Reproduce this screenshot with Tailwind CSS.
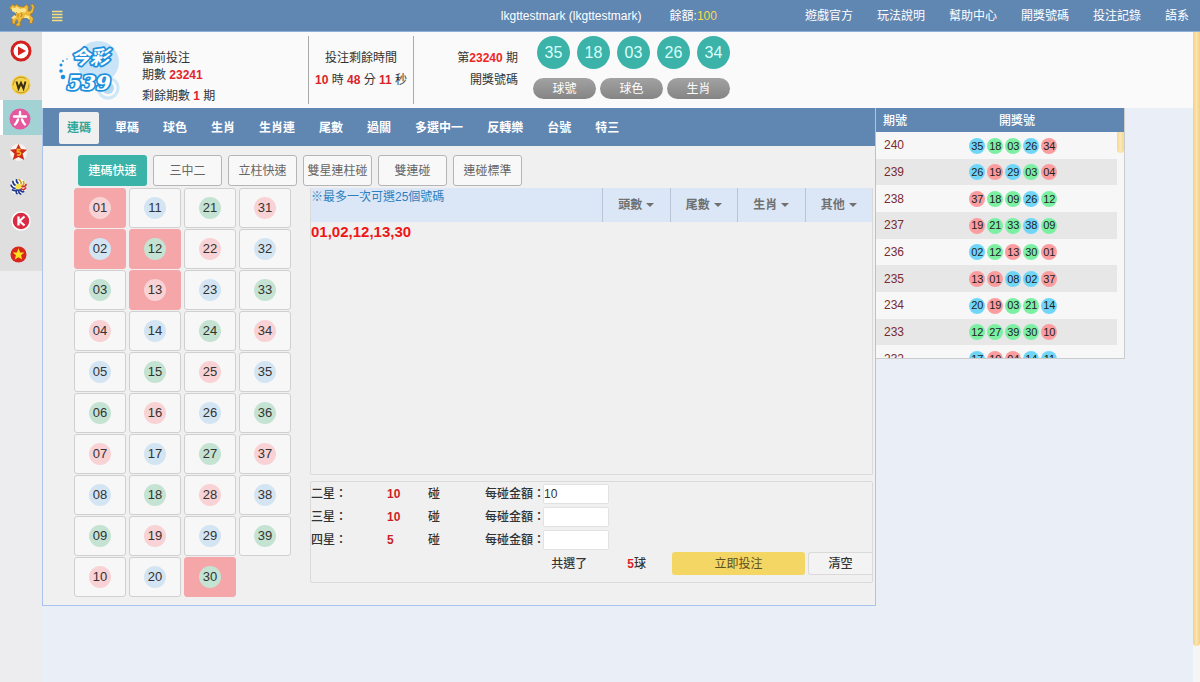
<!DOCTYPE html>
<html lang="zh-Hant">
<head>
<meta charset="utf-8">
<meta name="viewport" content="width=device-width, initial-scale=1">
<title>今彩539</title>
<script src="https://cdn.jsdelivr.net/npm/@tailwindcss/browser@4"></script>
</head>
<body class="min-h-screen flex flex-col bg-[#eaeef6] font-['Liberation_Sans','Noto_Sans_CJK_TC',sans-serif] text-xs text-[#333]">
<header class="flex h-8 items-center border-b border-[#8fb0d6] bg-[#6086b2] text-white">
  <a href="#" aria-label="首頁" class="ml-2">
    <svg class="h-7 w-7" viewBox="0 0 28 28"><path fill="#edb93a" stroke="#a8761c" stroke-width=".7" stroke-linejoin="round" d="M1.500 6l3-3.500 2 1.500 2-1.500 3 2 4 .5 3-2.500 2 2.500-.5 4 2.500 0 1.500-3.500-1.500-2.500 2.500-1 1.500 3-1.500 5.500-3 2 3.500 4-1.500 5-3-.5 1-3.500-4-2-4 1.500-2 4 .5 2.500-4 1-.5-2 2-2-1-3-1.500 1.500-.5 3-2.500 0-.5-5 4-4-.5-3-3-1z"/><path fill="#fce58a" d="M4 5.500l3 .5 2-1.500 3 2.500 4.500-1 2 1.500-1.500 3-4-.5-4 2-3-2-2-1zM3 16l3.500-3 2 2-3 2zM17 13l4 1 1 4-3-2-3 0z"/><path fill="none" stroke="#b37b1e" stroke-width=".8" d="M8 10q3 2 2 5M13 11q2 2 0 4"/></svg>
  </a>
  <button type="button" aria-label="選單" class="ml-[15px]">
    <svg class="h-3 w-3" viewBox="0 0 12 12"><path stroke="#f2df7e" stroke-width="1.500" d="M1 1.500h10.500M1 4.500h10.500M1 7.500h10.500M1 10.500h10.500"/></svg>
  </button>
  <p class="ml-auto">lkgttestmark (lkgttestmark)</p>
  <p class="ml-7">餘額:<span class="text-[#f5dc4a]">100</span></p>
  <nav class="mr-[11px] ml-22 flex gap-6">
    <a href="#">遊戲官方</a><a href="#">玩法說明</a><a href="#">幫助中心</a><a href="#">開獎號碼</a><a href="#">投注記錄</a><a href="#">語系</a>
  </nav>
</header>
<div class="flex flex-1">
  <aside class="w-[42px] shrink-0 bg-[#ededef]">
    <nav class="flex flex-col bg-[#dfdfdf]">
      <a href="#" aria-label="影片" class="flex h-[34px] items-center justify-center pt-[3px]">
        <svg class="h-[22px] w-[22px]" viewBox="0 0 22 22"><circle cx="11" cy="11" r="9" fill="#fff" stroke="#d3211d" stroke-width="3"/><path fill="#d3211d" d="M8 6.500l8 4.500-8 4.500z"/></svg></a>
      <a href="#" aria-label="威力" class="flex h-[34px] items-center justify-center pt-[3px]">
        <svg class="h-5 w-5" viewBox="0 0 20 20"><circle cx="10" cy="10" r="9.500" fill="#f4c93a"/><circle cx="10" cy="10" r="7.800" fill="#f7d44c" stroke="#a8842a" stroke-width=".7" stroke-dasharray="18 6"/><path fill="none" stroke="#3c300e" stroke-width="2" d="M5.500 6.500l2 7L10 8l2.500 5.500 2-7"/></svg></a>
      <a href="#" aria-label="六合" class="flex h-[35px] items-center justify-center border-l-3 border-white bg-[#a3d2d5] pt-0.5 pr-[5px]">
        <svg class="h-[22px] w-[22px]" viewBox="0 0 22 22"><circle cx="11" cy="11" r="10.500" fill="#e5579e"/><path fill="none" stroke="#fff" stroke-width="2.400" stroke-linecap="round" d="M11 4v3M5 8.500h12M9 11.500q-1 3-3 5M13 11.500q1 3 3 5"/></svg></a>
      <a href="#" aria-label="五星" class="flex h-[34px] items-center pl-2.5">
        <svg class="h-[17px] w-[17px]" viewBox="0 0 16 16"><circle cx="8" cy="8" r="8" fill="#f5f5ef"/><path fill="#cf2a1c" d="M8 0l2.300 4.800 5.700.6-4.200 3.800 1.600 5.800L8 12.200 2.600 15l1.600-5.800L0 5.400l5.700-.6z"/><path fill="none" stroke="#f6b51e" stroke-width="1.500" d="M10 5.300H7v2.200q3-.5 3 1.500t-3.500 1.200"/></svg></a>
      <a href="#" aria-label="彩球" class="flex h-[34px] items-center pl-2.5">
        <svg class="h-[17px] w-[17px]" viewBox="0 0 18 18"><circle cx="9" cy="9" r="8.500" fill="#fff"/><g fill="none" stroke-width="1.800"><path stroke="#20398d" d="M9 6Q6 4 7 1M6 8Q3 7 3 3M6 11Q2 11 1 7M8 13Q4 14 2 12"/><path stroke="#d2a51c" d="M12 7Q12 3 9 1M12 9Q16 7 14 3"/><path stroke="#d32b2c" d="M12 9Q17 10 17 6M11 11Q15 14 17 10"/><path stroke="#20398d" d="M10 12Q13 16 15 14M9 12Q9 17 12 17M8 12Q5 15 8 17"/></g><circle cx="9" cy="9" r="3" fill="#f6e04c"/></svg></a>
      <a href="#" aria-label="K彩" class="flex h-[35px] items-center justify-center">
        <svg class="h-5 w-5" viewBox="0 0 20 20"><circle cx="10" cy="10" r="9" fill="#da2b45" stroke="#fff" stroke-width="1.500"/><path fill="none" stroke="#fff" stroke-width="2.300" d="M7.500 5.500v9M13.500 5.500L8.500 10l5 4.500"/></svg></a>
      <a href="#" aria-label="越南彩" class="flex h-[33px] items-center pb-px pl-2.5">
        <svg class="h-[17px] w-[17px]" viewBox="0 0 18 18"><circle cx="9" cy="9" r="8.500" fill="#d8261c"/><path fill="#fbe21f" d="M9 2.500l1.700 4.300 4.500.2-3.500 2.900 1.200 4.500L9 11.900l-3.900 2.500 1.200-4.500L2.800 7l4.500-.2z"/></svg></a>
    </nav>
  </aside>
  <main class="min-w-0 flex-1">
    <section class="flex h-[76px] bg-[#fafafa]" aria-label="期數資訊">
      <svg class="mt-1.5 ml-4 h-16 w-16" viewBox="0 0 64 64" role="img" aria-label="今彩539">
        <circle cx="40" cy="24" r="21" fill="#c9e4f7"/><circle cx="50" cy="50" r="10" fill="#fafafa" stroke="#cfe7f7" stroke-width="3"/><circle cx="50" cy="50" r="6" fill="#b5daf3"/>
        <g fill="#1993e0"><circle cx="5" cy="39" r="2.300"/><circle cx="3" cy="33" r="1.800"/><circle cx="3" cy="27" r="1.500"/><circle cx="5" cy="23" r="1"/><circle cx="9" cy="21" r=".7"/></g>
        <g fill="#fff" stroke="#1c8fdd" stroke-width="3.500" stroke-linejoin="round" paint-order="stroke" font-weight="700" font-style="italic"><text x="13" y="26" font-size="19" font-family="Noto Sans CJK TC">今彩</text><text x="9" y="52" font-size="21" font-family="DejaVu Serif">539</text></g>
      </svg>
      <div class="mt-[18px] ml-5 w-[166px] leading-[17px]">
        <p>當前投注</p>
        <p>期數 <span class="font-bold text-[#e3242b]">23241</span></p>
        <p class="mt-1">剩餘期數 <span class="font-bold text-[#e3242b]">1</span> 期</p>
      </div>
      <div class="my-1 w-[106px] border-x border-[#aaa] pt-[11px] text-center leading-[22px]">
        <p>投注剩餘時間</p>
        <p class="whitespace-nowrap"><b class="text-[#d8232a]">10</b> 時 <b class="text-[#d8232a]">48</b> 分 <b class="text-[#d8232a]">11</b> 秒</p>
      </div>
      <div class="w-[104px] pt-[15px] text-right leading-[22px]">
        <p>第<b class="font-bold text-[#f02525]">23240</b> 期</p>
        <p>開獎號碼</p>
      </div>
      <div class="ml-[15px] pt-1">
        <ul class="flex gap-[7px] pl-1 text-base text-[#d9fffa]">
          <li class="flex size-[33px] items-center justify-center rounded-full bg-[#3cb3a9]">35</li>
          <li class="flex size-[33px] items-center justify-center rounded-full bg-[#3cb3a9]">18</li>
          <li class="flex size-[33px] items-center justify-center rounded-full bg-[#3cb3a9]">03</li>
          <li class="flex size-[33px] items-center justify-center rounded-full bg-[#3cb3a9]">26</li>
          <li class="flex size-[33px] items-center justify-center rounded-full bg-[#3cb3a9]">34</li>
        </ul>
        <div class="mt-[9px] flex gap-1 text-white">
          <button type="button" class="h-[21px] w-[63px] rounded-full bg-linear-to-b from-[#a2a2a2] to-[#858585]">球號</button>
          <button type="button" class="h-[21px] w-[63px] rounded-full bg-linear-to-b from-[#a2a2a2] to-[#858585]">球色</button>
          <button type="button" class="h-[21px] w-[63px] rounded-full bg-linear-to-b from-[#a2a2a2] to-[#858585]">生肖</button>
        </div>
      </div>
    </section>
    <div class="grid grid-cols-[834fr_249fr_68fr] items-start">
      <section class="min-w-0 border border-t-0 border-[#a9c4ee] bg-[#f0f0f0] pb-2" aria-label="投注">
        <nav class="flex h-[38px] items-center gap-2 bg-[#6086b2] pt-0.5 pl-4 font-bold text-white">
          <a href="#" aria-current="page" class="rounded-xs bg-[#f0f0f0] px-2 py-2 leading-4 text-[#2fa79b]">連碼</a>
          <a href="#" class="px-2">單碼</a><a href="#" class="px-2">球色</a><a href="#" class="px-2">生肖</a><a href="#" class="px-2">生肖連</a><a href="#" class="px-2">尾數</a><a href="#" class="px-2">過關</a><a href="#" class="px-2">多選中一</a><a href="#" class="px-2">反轉樂</a><a href="#" class="px-2">台號</a><a href="#" class="px-2">特三</a>
        </nav>
        <div class="mt-[9px] ml-[35px] flex gap-1.5 text-[#666]">
          <button type="button" class="h-[31px] w-[69px] rounded-[3px] bg-[#3cb3a9] font-medium text-white">連碼快速</button>
          <button type="button" class="h-[31px] w-[69px] rounded-[3px] border border-[#b5b5b5] bg-[#f8f8f8]">三中二</button>
          <button type="button" class="h-[31px] w-[69px] rounded-[3px] border border-[#b5b5b5] bg-[#f8f8f8]">立柱快速</button>
          <button type="button" class="h-[31px] w-[69px] rounded-[3px] border border-[#b5b5b5] bg-[#f8f8f8]">雙星連柱碰</button>
          <button type="button" class="h-[31px] w-[69px] rounded-[3px] border border-[#b5b5b5] bg-[#f8f8f8]">雙連碰</button>
          <button type="button" class="h-[31px] w-[69px] rounded-[3px] border border-[#b5b5b5] bg-[#f8f8f8]">連碰標準</button>
        </div>
        <div class="mt-0.5 mr-0.5 ml-[31px] flex gap-[19px]">
          <div id="numbers" class="grid shrink-0 grid-flow-col grid-rows-10 auto-cols-[52px] gap-x-[3px] gap-y-px"></div>
          <div class="flex min-w-0 flex-1 flex-col">
            <div class="h-[287px] rounded-b-xs border border-t-0 border-[#dadada]">
              <div class="flex h-[34px] bg-[#dbe7f7]">
                <p class="flex-1 leading-[18px] text-[#2f7fbd]">※最多一次可選25個號碼</p>
                <div class="grid w-[270px] grid-cols-4 text-[#707070] font-bold">
                  <button type="button" class="flex items-center justify-center gap-1 border-l border-[#b9c4d6]">頭數<svg class="h-1 w-2" viewBox="0 0 8 4"><path fill="#707070" d="M0 0h8L4 4z"/></svg></button>
                  <button type="button" class="flex items-center justify-center gap-1 border-l border-[#b9c4d6]">尾數<svg class="h-1 w-2" viewBox="0 0 8 4"><path fill="#707070" d="M0 0h8L4 4z"/></svg></button>
                  <button type="button" class="flex items-center justify-center gap-1 border-l border-[#b9c4d6]">生肖<svg class="h-1 w-2" viewBox="0 0 8 4"><path fill="#707070" d="M0 0h8L4 4z"/></svg></button>
                  <button type="button" class="flex items-center justify-center gap-1 border-l border-[#b9c4d6]">其他<svg class="h-1 w-2" viewBox="0 0 8 4"><path fill="#707070" d="M0 0h8L4 4z"/></svg></button>
                </div>
              </div>
              <p class="text-[15px] leading-5 font-bold text-[#f01515]">01,02,12,13,30</p>
            </div>
            <form class="mt-1.5 rounded-xs border border-[#dadada] pb-[7px] font-medium">
              <div class="grid grid-cols-[76px_41px_57px_58px_66px] gap-y-[3px] pt-0.5 leading-5">
                <span>二星：</span><b class="text-[#cc1f26]">10</b><span>碰</span><label for="a2" class="whitespace-nowrap">每碰金額：</label><input id="a2" value="10" class="h-5 w-full min-w-0 rounded-xs border border-[#e2e2e2] bg-white font-normal">
                <span>三星：</span><b class="text-[#cc1f26]">10</b><span>碰</span><label for="a3" class="whitespace-nowrap">每碰金額：</label><input id="a3" class="h-5 w-full min-w-0 rounded-xs border border-[#e2e2e2] bg-white">
                <span>四星：</span><b class="text-[#cc1f26]">5</b><span>碰</span><label for="a4" class="whitespace-nowrap">每碰金額：</label><input id="a4" class="h-5 w-full min-w-0 rounded-xs border border-[#e2e2e2] bg-white">
              </div>
              <div class="mt-0.5 flex items-center justify-end">
                <span class="mr-10">共選了</span>
                <span class="mr-[26px]"><b class="text-[#dc1f26]">5</b>球</span>
                <button type="button" class="mr-[3px] h-[23px] w-[133px] rounded-[3px] bg-[#f3d664] font-normal text-[#5d5020]">立即投注</button>
                <button type="reset" class="h-[23px] w-16 rounded-l-[3px] border border-r-0 border-[#dadada] bg-[#f3f3f3]">清空</button>
              </div>
            </form>
          </div>
        </div>
      </section>
      <section class="h-[251px] min-w-0 overflow-hidden border-r border-b border-[#ccc] bg-[#f7f7f7]" aria-label="歷史開獎">
        <div class="flex h-6 items-center bg-[#6086b2] pt-px pl-[7px] font-medium text-white"><span class="w-[15%]">期號</span><span class="flex-1 pr-[9px] text-center">開獎號</span></div>
        <div class="flex">
          <table class="h-[240px] flex-1"><tbody id="history"></tbody></table>
          <div class="w-[7px]"><div class="h-[21px] rounded-b-sm bg-linear-to-r from-[#f8d78c] via-[#fae9b6] to-[#f8d78c]"></div></div>
        </div>
      </section>
    </div>
  </main>
  <div class="w-[7px] shrink-0 bg-[#f5f5f5]"><div class="h-[614px] rounded-b-sm bg-linear-to-r from-[#f5cf83] via-[#fbe4b0] to-[#f5cf83]"></div></div>
</div>
<script>
  const pad = n => String(n).padStart(2, '0');
  // Ball colours repeat in threes: green, red, blue.
  const pale = ['bg-[#c4e3d2]', 'bg-[#f8d2d4]', 'bg-[#d3e4f3]'];
  const vivid = ['bg-[#7bf0a2]', 'bg-[#fb9d9f]', 'bg-[#70d6f8]'];
  const picked = [1, 2, 12, 13, 30];
  document.getElementById('numbers').innerHTML = Array.from({ length: 39 }, (_, i) => i + 1).map(n =>
    `<button type="button" aria-pressed="${picked.includes(n)}" class="flex h-10 items-center justify-center rounded-[3px] border ${picked.includes(n) ? 'border-[#f4a6a9] bg-[#f4a6a9]' : 'border-[#d0d0d0] bg-[#f7f7f7]'}"><span class="flex size-[22px] items-center justify-center rounded-full text-[13px] ${pale[n % 3]}">${pad(n)}</span></button>`).join('');
  const draws = [
    [240, 35, 18, 3, 26, 34], [239, 26, 19, 29, 3, 4], [238, 37, 18, 9, 26, 12],
    [237, 19, 21, 33, 38, 9], [236, 2, 12, 13, 30, 1], [235, 13, 1, 8, 2, 37],
    [234, 20, 19, 3, 21, 14], [233, 12, 27, 39, 30, 10], [232, 17, 19, 4, 14, 11]
  ];
  document.getElementById('history').innerHTML = draws.map(([id, ...balls]) =>
    `<tr class="even:bg-[#e7e7e7]"><td class="w-[35%] pl-2 text-[#792c2e]">${id}</td><td><div class="flex gap-0.5 pt-px pl-[9px] text-[11px] text-[#222]">${balls.map(b =>
      `<span class="flex size-4 items-center justify-center rounded-full ${vivid[b % 3]}">${pad(b)}</span>`).join('')}</div></td></tr>`).join('');
</script>
</body>
</html>
